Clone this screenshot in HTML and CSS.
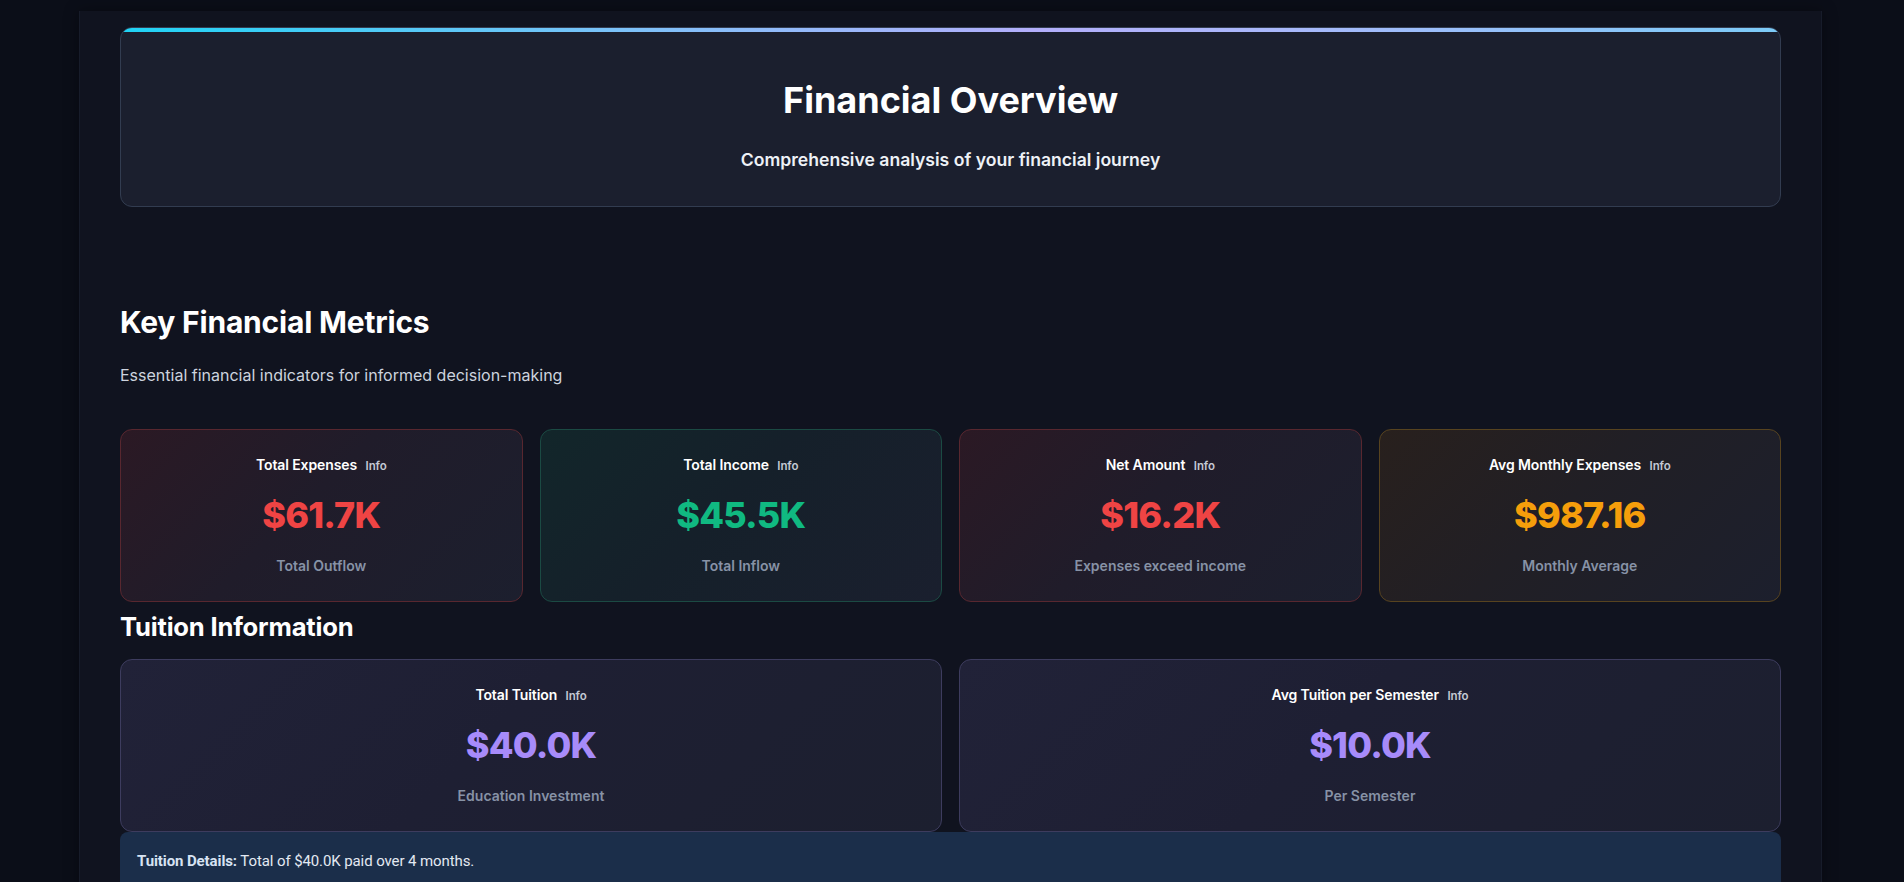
FILE: index.html
```html
<!DOCTYPE html>
<html lang="en">
<head>
<meta charset="utf-8">
<title>Financial Overview</title>
<link rel="stylesheet" href="styles.css">
</head>
<body>
<main class="page">
  <section class="hero">
    <h1 class="hero-title">Financial Overview</h1>
    <p class="hero-sub">Comprehensive analysis of your financial journey</p>
  </section>

  <section class="metrics">
    <h2 class="section-title">Key Financial Metrics</h2>
    <p class="section-desc">Essential financial indicators for informed decision-making</p>
    <div class="grid-4">
      <div class="card card-red">
        <div class="card-label">Total Expenses <span class="info">Info</span></div>
        <div class="card-value val-red">$61.7K</div>
        <div class="card-sub">Total Outflow</div>
      </div>
      <div class="card card-green">
        <div class="card-label">Total Income <span class="info">Info</span></div>
        <div class="card-value val-green">$45.5K</div>
        <div class="card-sub">Total Inflow</div>
      </div>
      <div class="card card-red">
        <div class="card-label">Net Amount <span class="info">Info</span></div>
        <div class="card-value val-red">$16.2K</div>
        <div class="card-sub">Expenses exceed income</div>
      </div>
      <div class="card card-amber">
        <div class="card-label">Avg Monthly Expenses <span class="info">Info</span></div>
        <div class="card-value val-amber">$987.16</div>
        <div class="card-sub">Monthly Average</div>
      </div>
    </div>
  </section>

  <section class="tuition">
    <h3 class="tuition-title">Tuition Information</h3>
    <div class="grid-2">
      <div class="card card-purple">
        <div class="card-label">Total Tuition <span class="info">Info</span></div>
        <div class="card-value val-purple">$40.0K</div>
        <div class="card-sub">Education Investment</div>
      </div>
      <div class="card card-purple">
        <div class="card-label">Avg Tuition per Semester <span class="info">Info</span></div>
        <div class="card-value val-purple">$10.0K</div>
        <div class="card-sub">Per Semester</div>
      </div>
    </div>
    <div class="details"><strong>Tuition Details:</strong> Total of $40.0K paid over 4 months.</div>
  </section>
</main>
</body>
</html>
```

FILE: styles.css
```css
html, body {
  margin: 0;
  padding: 0;
  overflow: hidden;
  height: 882px;
}
body {
  background: #0b0e18;
  font-family: Inter, "Noto Sans", sans-serif;
  color: #f8fafc;
}
.page {
  box-sizing: border-box;
  width: 1743px;
  margin: 11px 0 0 79px;
  min-height: 900px;
  padding: 16px 40px 0 40px;
  background: #10131f;
  border-left: 1px solid #171c2a;
  border-right: 1px solid #171c2a;
  box-shadow: 0 0 14px rgba(0, 0, 0, 0.35);
}
.hero {
  position: relative;
  background: #1b1f2e;
  border: 1px solid #323c50;
  border-radius: 12px;
  padding: 51px 20px 33px;
  text-align: center;
  overflow: hidden;
}
.hero::before {
  content: "";
  position: absolute;
  left: 0;
  right: 0;
  top: 0;
  height: 4px;
  background: linear-gradient(90deg, #1fd3f5 0%, #7cc2f9 30%, #b3aefb 55%, #a9b8fb 70%, #7ccbf8 100%);
}
.hero-title {
  margin: 0 0 24.5px;
  font-size: 36px;
  line-height: 1.2;
  font-weight: 700;
  color: #ffffff;
  letter-spacing: 0;
}
.hero-sub {
  margin: 0;
  font-size: 17.6px;
  line-height: 1.5;
  font-weight: 600;
  color: #eef1f6;
}
.metrics {
  padding-top: 97px;
}
.section-title {
  margin: 0 0 23px;
  font-size: 30px;
  line-height: 1.2;
  font-weight: 700;
  color: #ffffff;
  letter-spacing: -0.2px;
}
.section-desc {
  margin: 0 0 42px;
  font-size: 16px;
  line-height: 1.5;
  color: #cdd3de;
}
.grid-4 {
  display: grid;
  grid-template-columns: repeat(4, 1fr);
  gap: 17px;
}
.grid-2 {
  display: grid;
  grid-template-columns: repeat(2, 1fr);
  gap: 17px;
}
.card {
  box-sizing: border-box;
  height: 172.5px;
  border-radius: 12px;
  border: 1px solid #3a3d5c;
  padding: 25px 16px 0;
  display: flex;
  flex-direction: column;
  align-items: center;
  text-align: center;
}
.card-red {
  border-color: #58272f;
  background: linear-gradient(135deg, #2b1924 0%, #201c2a 45%, #1c1f2e 100%);
}
.card-green {
  border-color: #1b4a43;
  background: linear-gradient(135deg, #12262a 0%, #15202a 45%, #1a1f2e 100%);
}
.card-amber {
  border-color: #57431f;
  background: linear-gradient(135deg, #28201d 0%, #211f25 45%, #1c1f2d 100%);
}
.card-purple {
  border-color: #3d3c5e;
  background: linear-gradient(135deg, #212238 0%, #1e1f33 45%, #1c1f2f 100%);
}
.card-label {
  font-size: 14px;
  line-height: 20px;
  font-weight: 600;
  color: #ffffff;
  letter-spacing: -0.1px;
}
.info {
  margin-left: 5px;
  font-size: 11.5px;
  font-weight: 600;
  color: #c4c9d4;
}
.card-value {
  margin-top: 17.5px;
  font-size: 36px;
  line-height: 1.2;
  font-weight: 800;
  letter-spacing: -0.8px;
}
.val-red { color: #ef4444; }
.val-green { color: #10b981; }
.val-amber { color: #f59e0b; }
.val-purple { color: #a78bfa; }
.card-sub {
  margin-top: 19px;
  font-size: 14px;
  line-height: 20px;
  font-weight: 600;
  color: #8792a6;
}
.tuition {
  padding-top: 10px;
}
.tuition-title {
  margin: 0 0 17px;
  font-size: 25.6px;
  line-height: 1.2;
  font-weight: 700;
  color: #ffffff;
  letter-spacing: -0.2px;
}
.details {
  margin-top: 0;
  background: #1b2e4a;
  border-radius: 8px;
  padding: 17px 17px 24px;
  font-family: Roboto, "Noto Sans", sans-serif;
  font-size: 15px;
  line-height: 24px;
  letter-spacing: -0.1px;
  color: #e3e9f2;
}
.details strong {
  font-weight: 700;
  color: #d7e3f3;
}
```
